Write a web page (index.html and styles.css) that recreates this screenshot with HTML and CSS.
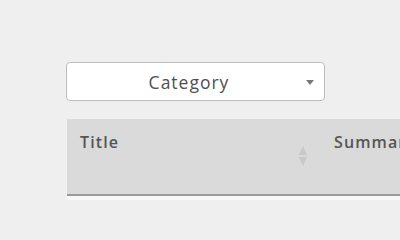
FILE: index.html
```html
<!DOCTYPE html>
<html lang="en">
<head>
<meta charset="utf-8">
<title>Table</title>
<link rel="stylesheet" href="styles.css">
</head>
<body>
<div class="page">
  <div class="filter">
    <div class="select">
      <span class="select-label">Category</span>
      <span class="select-arrow"></span>
    </div>
  </div>
  <table class="grid">
    <thead>
      <tr>
        <th class="col-title">
          <div class="th-inner">
            <span>Title</span>
            <span class="sort"><span class="sort-up"></span><span class="sort-down"></span></span>
          </div>
        </th>
        <th class="col-summary"><div class="th-inner"><span>Summary</span></div></th>
      </tr>
    </thead>
    <tbody>
      <tr><td></td><td></td></tr>
    </tbody>
  </table>
</div>
</body>
</html>
```

FILE: styles.css
```css
html, body {
  margin: 0;
  padding: 0;
  background: #efefef;
  overflow: hidden;
}
body {
  width: 400px;
  height: 200px;
  font-family: "Open Sans", "Noto Sans", sans-serif;
  color: #555;
}
.page {
  padding: 62px 0 0 66px;
  width: 600px;
}
.filter {
  margin-bottom: 18px;
}
.select {
  box-sizing: border-box;
  width: 259px;
  height: 39px;
  background: #fff;
  border: 1px solid #bdbdbd;
  border-radius: 4px;
  display: flex;
  align-items: center;
  justify-content: center;
  position: relative;
}
.select-label {
  font-size: 17.5px;
  letter-spacing: 1px;
  color: #505050;
  margin-right: 13px;
}
.select-arrow {
  position: absolute;
  right: 10px;
  top: 17px;
  width: 0;
  height: 0;
  border-left: 4.5px solid transparent;
  border-right: 4.5px solid transparent;
  border-top: 5px solid #777;
}
.grid {
  border-collapse: collapse;
  margin-left: 1px;
}
.grid th {
  background: #dadada;
  height: 75px;
  padding: 0;
  vertical-align: top;
  text-align: left;
  border-bottom: 2px solid #9a9a9a;
  font-size: 16px;
  letter-spacing: 1.1px;
  font-weight: 600;
  color: #555;
}
.col-title { width: 254px; }
.col-summary { width: 200px; }
.th-inner {
  display: flex;
  justify-content: space-between;
  padding: 12px 14px 0 13px;
}
.sort {
  display: flex;
  flex-direction: column;
  gap: 2px;
  margin-top: 15px;
}
.sort-up, .sort-down {
  width: 0;
  height: 0;
  border-left: 4px solid transparent;
  border-right: 4px solid transparent;
}
.sort-up { border-bottom: 9px solid #c8c8c8; }
.sort-down { border-top: 9px solid #c8c8c8; }
.grid td {
  background: #f7f7f7;
  height: 30px;
}
```
